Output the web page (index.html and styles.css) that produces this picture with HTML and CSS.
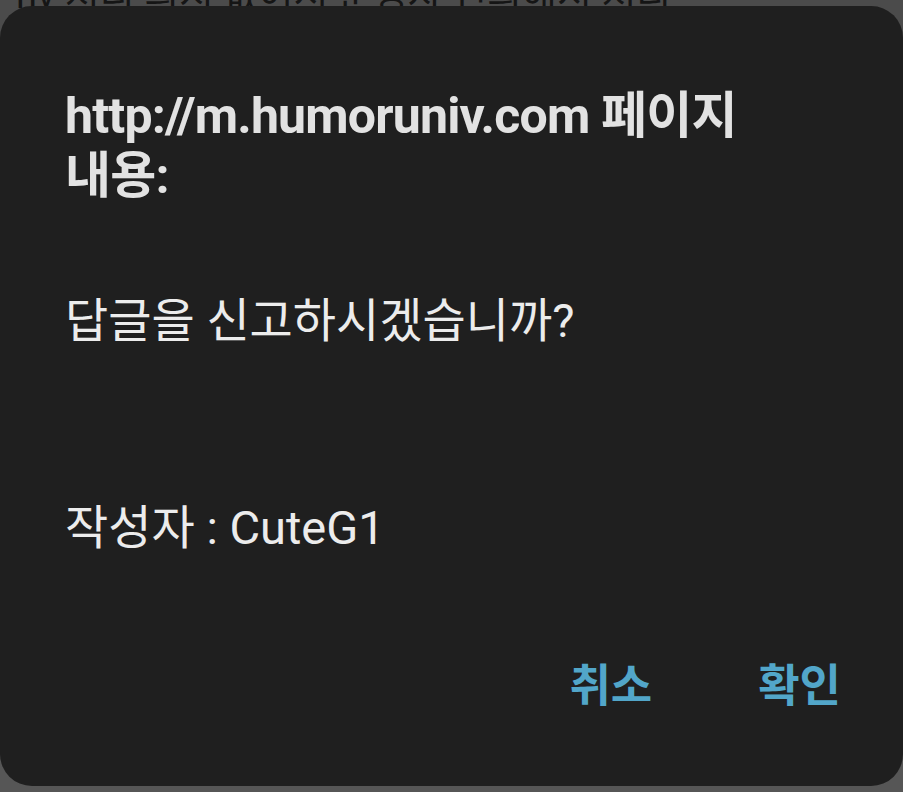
FILE: index.html
```html
<!DOCTYPE html>
<html lang="ko">

<head>
    <meta charset="UTF-8" />
    <meta name="viewport" content="width=device-width, initial-scale=1.0" />
    <title>페이지 내용</title>
    <link rel="stylesheet" href="styles.css">
</head>

<body>

    <div class="backdrop">
        <p class="behind-text">nv 처리 의지 없어서 운영자 건의해서 처리</p>
    </div>

    <div class="dialog">
        <h2 class="dialog-title">http://m.humoruniv.com 페이지<br>내용:</h2>

        <p class="dialog-message">답글을 신고하시겠습니까?


작성자 : CuteG1</p>

        <div class="dialog-buttons">
            <button class="dialog-btn">취소</button>
            <button class="dialog-btn">확인</button>
        </div>
    </div>

</body>

</html>
```

FILE: styles.css
```css
* {
    box-sizing: border-box;
    margin: 0;
    padding: 0;
}

body {
    font-family: Roboto, "Noto Sans CJK KR", sans-serif;
    background-color: #565656;
    width: 903px;
    height: 792px;
    overflow: hidden;
    position: relative;
}

.backdrop {
    height: 40px;
    background: #4b4b4b;
    overflow: hidden;
}

.behind-text {
    font-size: 38px;
    color: #151515;
    padding-left: 16px;
    margin-top: -36px;
    white-space: nowrap;
}

/* alert box sits over the page */
.dialog {
    position: absolute;
    top: 6px;
    left: 0;
    width: 903px;
    height: 780px;
    background: #1f1f1f;
    border-radius: 32px;
    padding: 80px 65px 0;
    display: flex;
    flex-direction: column;
}

.dialog-title {
    font-size: 50px;
    font-weight: bold;
    line-height: 60px;
    letter-spacing: -0.8px;
    color: #e2e2e2;
}

.dialog-message {
    margin-top: 80px;
    font-size: 47px;
    line-height: 69px;
    color: #ececec;
    white-space: pre-line;
}

.dialog-buttons {
    display: flex;
    justify-content: flex-end;
    gap: 106px;
    margin-top: 95px;
    margin-right: -3px;
}

.dialog-btn {
    background: none;
    border: none;
    font-family: inherit;
    font-size: 45px;
    font-weight: bold;
    color: #52a6c9;
    line-height: 60px;
}
```
